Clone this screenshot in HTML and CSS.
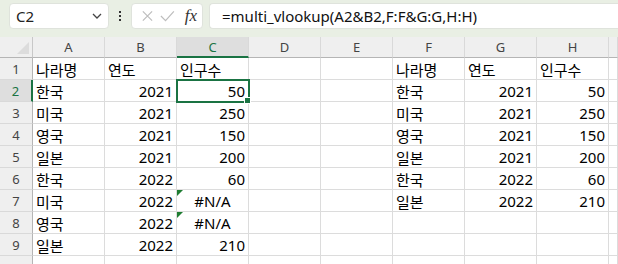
FILE: index.html
```html
<!DOCTYPE html>
<html lang="ko">
  <head>
    <meta charset="UTF-8" />
    <title>multi_vlookup</title>
    <link rel="stylesheet" href="styles.css">
  </head>
  <body>
    <div class="topbar">
      <div class="name-box">
        <span>C2</span>
        <svg class="chevron" width="10" height="6" viewBox="0 0 10 6"><path d="M1 1 L5 5 L9 1" fill="none" stroke="#444" stroke-width="1.3"/></svg>
      </div>
      <div class="dots"><i></i><i></i><i></i></div>
      <div class="fx-box">
        <svg width="14" height="14" viewBox="0 0 14 14"><path d="M2 2 L12 12 M12 2 L2 12" stroke="#bdbdbd" stroke-width="1.3"/></svg>
        <svg width="16" height="14" viewBox="0 0 16 14"><path d="M1 7 L6 12 L15 2" fill="none" stroke="#bdbdbd" stroke-width="1.3"/></svg>
        <span class="fx">fx</span>
      </div>
      <div class="formula">=multi_vlookup(A2&amp;B2,F:F&amp;G:G,H:H)</div>
    </div>

    <div class="sheet">
      <div class="corner"></div>
      <div class="colh">A</div>
      <div class="colh">B</div>
      <div class="colh active">C</div>
      <div class="colh">D</div>
      <div class="colh">E</div>
      <div class="colh">F</div>
      <div class="colh">G</div>
      <div class="colh">H</div>
      <div class="colh"></div>

      <div class="rowh">1</div>
      <div class="cell">나라명</div><div class="cell">연도</div><div class="cell">인구수</div>
      <div class="cell"></div><div class="cell"></div>
      <div class="cell">나라명</div><div class="cell">연도</div><div class="cell">인구수</div><div class="cell"></div>

      <div class="rowh active">2</div>
      <div class="cell">한국</div><div class="cell num">2021</div><div class="cell num selected">50<b class="handle"></b></div>
      <div class="cell"></div><div class="cell"></div>
      <div class="cell">한국</div><div class="cell num">2021</div><div class="cell num">50</div><div class="cell"></div>

      <div class="rowh">3</div>
      <div class="cell">미국</div><div class="cell num">2021</div><div class="cell num">250</div>
      <div class="cell"></div><div class="cell"></div>
      <div class="cell">미국</div><div class="cell num">2021</div><div class="cell num">250</div><div class="cell"></div>

      <div class="rowh">4</div>
      <div class="cell">영국</div><div class="cell num">2021</div><div class="cell num">150</div>
      <div class="cell"></div><div class="cell"></div>
      <div class="cell">영국</div><div class="cell num">2021</div><div class="cell num">150</div><div class="cell"></div>

      <div class="rowh">5</div>
      <div class="cell">일본</div><div class="cell num">2021</div><div class="cell num">200</div>
      <div class="cell"></div><div class="cell"></div>
      <div class="cell">일본</div><div class="cell num">2021</div><div class="cell num">200</div><div class="cell"></div>

      <div class="rowh">6</div>
      <div class="cell">한국</div><div class="cell num">2022</div><div class="cell num">60</div>
      <div class="cell"></div><div class="cell"></div>
      <div class="cell">한국</div><div class="cell num">2022</div><div class="cell num">60</div><div class="cell"></div>

      <div class="rowh">7</div>
      <div class="cell">미국</div><div class="cell num">2022</div><div class="cell err">#N/A</div>
      <div class="cell"></div><div class="cell"></div>
      <div class="cell">일본</div><div class="cell num">2022</div><div class="cell num">210</div><div class="cell"></div>

      <div class="rowh">8</div>
      <div class="cell">영국</div><div class="cell num">2022</div><div class="cell err">#N/A</div>
      <div class="cell"></div><div class="cell"></div>
      <div class="cell"></div><div class="cell"></div><div class="cell"></div><div class="cell"></div>

      <div class="rowh">9</div>
      <div class="cell">일본</div><div class="cell num">2022</div><div class="cell num">210</div>
      <div class="cell"></div><div class="cell"></div>
      <div class="cell"></div><div class="cell"></div><div class="cell"></div><div class="cell"></div>

      <div class="rowh"></div>
      <div class="cell"></div><div class="cell"></div><div class="cell"></div>
      <div class="cell"></div><div class="cell"></div>
      <div class="cell"></div><div class="cell"></div><div class="cell"></div><div class="cell"></div>
    </div>
  </body>
</html>
```

FILE: styles.css
```css
body {
  margin: 0;
  padding: 0;
  width: 618px;
  height: 264px;
  overflow: hidden;
  background-color: #ffffff;
  font-family: "Noto Sans", "Noto Sans CJK KR", sans-serif;
  color: #000;
}
.topbar {
  height: 37px;
  background-color: #e9efe4;
  display: flex;
  align-items: flex-start;
  padding: 3px 0 0 9px;
  box-sizing: border-box;
}
.name-box,
.fx-box,
.formula {
  height: 26px;
  background-color: #fff;
  border: 1px solid #dfe3dc;
  border-radius: 4px;
  box-sizing: border-box;
  display: flex;
  align-items: center;
}
.name-box {
  width: 100px;
  padding: 0 6px 0 6px;
  justify-content: space-between;
  font-size: 15px;
  color: #222;
}
.dots {
  width: 22px;
  height: 26px;
  display: flex;
  flex-direction: column;
  align-items: center;
  justify-content: center;
  gap: 2px;
}
.dots i {
  width: 2px;
  height: 2px;
  background-color: #333;
}
.fx-box {
  width: 72px;
  padding: 0 5px 0 9px;
  gap: 6px;
}
.fx {
  font-family: "Liberation Serif", serif;
  font-style: italic;
  font-size: 17px;
  color: #333;
  margin-left: 4px;
}
.formula {
  margin-left: 6px;
  flex: 1;
  border-right: none;
  border-radius: 4px 0 0 4px;
  padding-left: 12px;
  font-size: 15px;
  color: #111;
}
.sheet {
  display: grid;
  grid-template-columns: 33px repeat(8, 72px) 9px;
  grid-auto-rows: 22px;
  grid-template-rows: 21px;
  font-size: 15px;
}
.corner {
  background-color: #efefef;
  border-right: 1px solid #c8c8c8;
  border-bottom: 1px solid #b5b5b5;
  position: relative;
}
.corner::after {
  content: "";
  position: absolute;
  right: 3px;
  bottom: 3px;
  border-left: 12px solid transparent;
  border-bottom: 12px solid #dcdcdc;
}
.colh {
  background-color: #efefef;
  border-right: 1px solid #d9d9d9;
  border-bottom: 1px solid #b5b5b5;
  display: flex;
  align-items: center;
  justify-content: center;
  font-size: 13px;
  color: #444;
}
.colh.active {
  background-color: #dedede;
  border-bottom: 2px solid #1a7343;
  color: #1a7343;
}
.rowh {
  background-color: #efefef;
  border-right: 1px solid #b5b5b5;
  border-bottom: 1px solid #d9d9d9;
  display: flex;
  align-items: center;
  justify-content: center;
  font-size: 13px;
  color: #444;
  box-sizing: border-box;
}
.rowh.active {
  background-color: #dedede;
  border-right: 2px solid #1a7343;
  color: #1a7343;
}
.cell {
  border-right: 1px solid #dcdcdc;
  border-bottom: 1px solid #dcdcdc;
  display: flex;
  align-items: center;
  padding: 1px 3px 0;
  box-sizing: border-box;
  white-space: nowrap;
  position: relative;
}
.num {
  justify-content: flex-end;
}
.err {
  justify-content: center;
}
.err::before {
  content: "";
  position: absolute;
  left: 0;
  top: 0;
  border-top: 6px solid #1e7d32;
  border-right: 6px solid transparent;
}
.selected {
  outline: 2px solid #1a7343;
  outline-offset: -1px;
  z-index: 1;
}
.handle {
  position: absolute;
  right: -3px;
  bottom: -3px;
  width: 5px;
  height: 5px;
  background-color: #1a7343;
  border: 1px solid #fff;
}
```
